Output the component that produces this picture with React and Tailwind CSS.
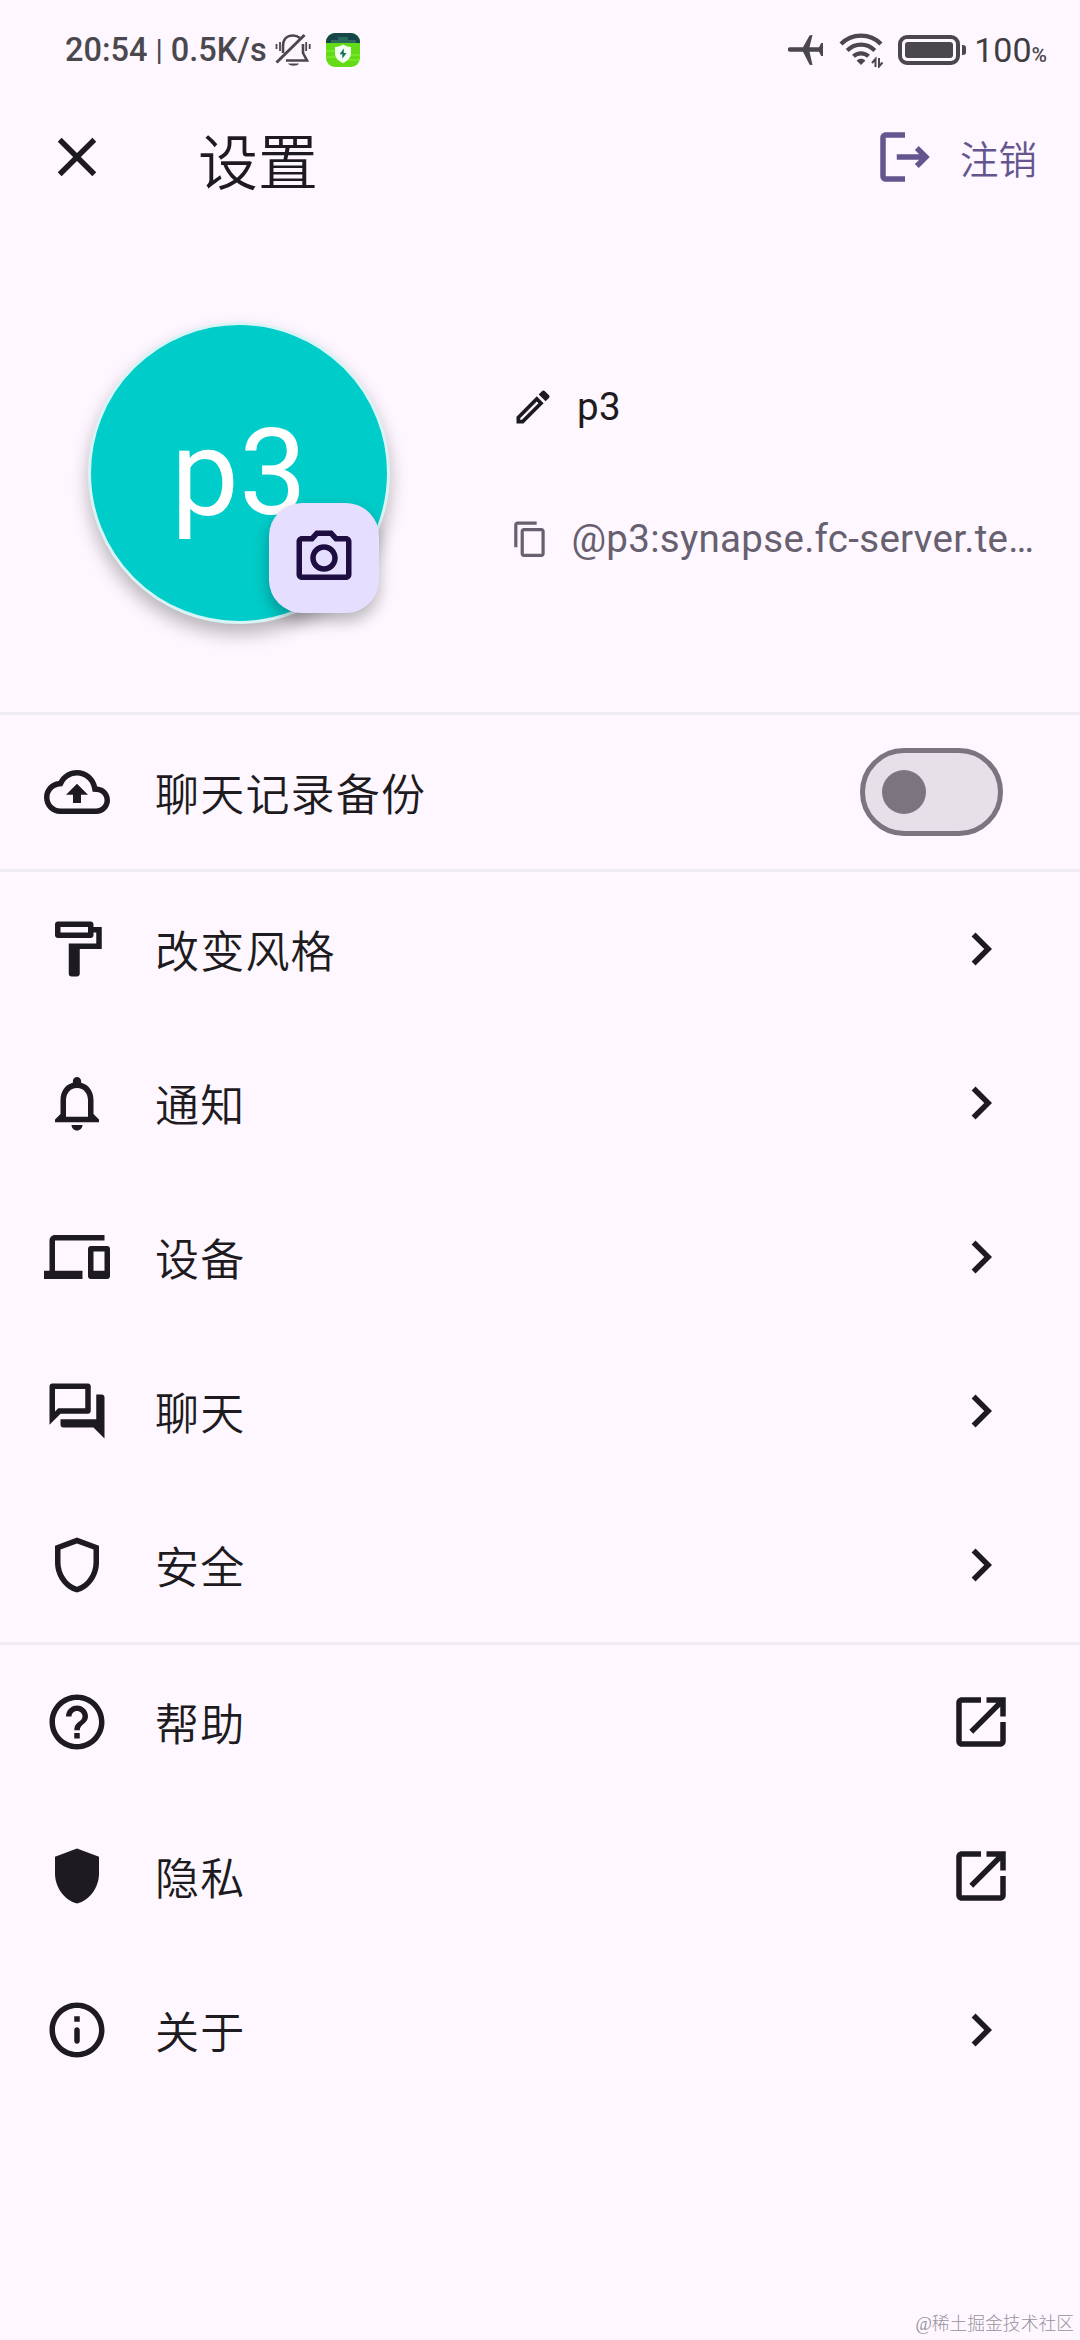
import React, { useState } from "react";

// 24x24 material icon paths
const ICONS = {
  close: "M19 6.41 17.59 5 12 10.59 6.41 5 5 6.41 10.59 12 5 17.59 6.41 19 12 13.41 17.59 19 19 17.59 13.41 12z",
  logout: "M17 8l-1.41 1.41L17.17 11H9v2h8.17l-1.58 1.58L17 16l4-4-4-4zM5 5h7V3H5c-1.1 0-2 .9-2 2v14c0 1.1.9 2 2 2h7v-2H5V5z",
  camera: "M14.12 4l1.83 2H20v12H4V6h4.05l1.83-2h4.24M15 2H9L7.17 4H4c-1.1 0-2 .9-2 2v12c0 1.1.9 2 2 2h16c1.1 0 2-.9 2-2V6c0-1.1-.9-2-2-2h-3.17L15 2zm-3 7c1.65 0 3 1.35 3 3s-1.35 3-3 3-3-1.35-3-3 1.35-3 3-3m0-2c-2.76 0-5 2.24-5 5s2.24 5 5 5 5-2.24 5-5-2.24-5-5-5z",
  edit: "M14.06 9.02l.92.92L5.92 19H5v-.92l9.06-9.06M17.66 3c-.25 0-.51.1-.7.29l-1.83 1.83 3.75 3.75 1.83-1.83c.39-.39.39-1.02 0-1.41l-2.34-2.34c-.2-.2-.45-.29-.71-.29zm-3.6 3.19L3 17.25V21h3.75L17.81 9.94l-3.75-3.75z",
  copy: "M16 1H4c-1.1 0-2 .9-2 2v14h2V3h12V1zm3 4H8c-1.1 0-2 .9-2 2v14c0 1.1.9 2 2 2h11c1.1 0 2-.9 2-2V7c0-1.1-.9-2-2-2zm0 16H8V7h11v14z",
  backup: "M19.35 10.04C18.67 6.59 15.64 4 12 4 9.11 4 6.6 5.64 5.35 8.04 2.34 8.36 0 10.91 0 14c0 3.31 2.69 6 6 6h13c2.76 0 5-2.24 5-5 0-2.64-2.05-4.78-4.65-4.96zM19 18H6c-2.21 0-4-1.79-4-4 0-2.05 1.53-3.76 3.56-3.97l1.07-.11.5-.95C8.08 7.14 9.94 6 12 6c2.62 0 4.88 1.86 5.39 4.43l.3 1.5 1.53.11c1.56.1 2.78 1.41 2.78 2.96 0 1.65-1.35 3-3 3zM8 13h2.55v3h2.9v-3H16l-4-4z",
  paint: "M18 4V3c0-.55-.45-1-1-1H5c-.55 0-1 .45-1 1v4c0 .55.45 1 1 1h12c.55 0 1-.45 1-1V6h1v4H9v11c0 .55.45 1 1 1h2c.55 0 1-.45 1-1v-9h8V4h-3zM16 6H6V4h10v2z",
  bell: "M12 22c1.1 0 2-.9 2-2h-4c0 1.1.9 2 2 2zm6-6v-5c0-3.07-1.63-5.64-4.5-6.32V4c0-.83-.67-1.5-1.5-1.5s-1.5.67-1.5 1.5v.68C7.64 5.36 6 7.92 6 11v5l-2 2v1h16v-1l-2-2zm-2 1H8v-6c0-2.48 1.51-4.5 4-4.5s4 2.02 4 4.5v6z",
  devices: "M4 6h18V4H4c-1.1 0-2 .9-2 2v11H0v3h14v-3H4V6zm19 2h-6c-.55 0-1 .45-1 1v10c0 .55.45 1 1 1h6c.55 0 1-.45 1-1V9c0-.55-.45-1-1-1zm-1 9h-4v-7h4v7z",
  forum: "M15 4v7H5.17L4 12.17V4h11m1-2H3c-.55 0-1 .45-1 1v14l4-4h10c.55 0 1-.45 1-1V3c0-.55-.45-1-1-1zm5 4h-2v9H6v2c0 .55.45 1 1 1h11l4 4V7c0-.55-.45-1-1-1z",
  shield: "M12 2L4 5v6.09c0 5.05 3.41 9.76 8 10.91 4.59-1.15 8-5.86 8-10.91V5l-8-3zm6 9.09c0 4-2.55 7.7-6 8.83-3.45-1.13-6-4.82-6-8.83v-4.7l6-2.25 6 2.25v4.7z",
  shieldFull: "M12 2L4 5v6.09c0 5.05 3.41 9.76 8 10.91 4.59-1.15 8-5.86 8-10.91V5l-8-3z",
  help: "M11 18h2v-2h-2v2zm1-16C6.48 2 2 6.48 2 12s4.48 10 10 10 10-4.48 10-10S17.52 2 12 2zm0 18c-4.41 0-8-3.59-8-8s3.59-8 8-8 8 3.59 8 8-3.59 8-8 8zm0-14c-2.21 0-4 1.79-4 4h2c0-1.1.9-2 2-2s2 .9 2 2c0 2-3 1.75-3 5h2c0-2.25 3-2.5 3-5 0-2.21-1.79-4-4-4z",
  info: "M11 7h2v2h-2zm1 4c-.55 0-1 .45-1 1v4c0 .55.45 1 1 1s1-.45 1-1v-4c0-.55-.45-1-1-1zm0-9C6.48 2 2 6.48 2 12s4.48 10 10 10 10-4.48 10-10S17.52 2 12 2zm0 18c-4.41 0-8-3.59-8-8s3.59-8 8-8 8 3.59 8 8-3.59 8-8 8z",
  chevron: "M10 6L8.59 7.41 13.17 12l-4.58 4.59L10 18l6-6z",
  open: "M19 19H5V5h7V3H5c-1.11 0-2 .9-2 2v14c0 1.1.89 2 2 2h14c1.1 0 2-.9 2-2v-7h-2v7zM14 3v2h3.59l-9.83 9.83 1.41 1.41L19 6.41V10h2V3h-7z",
};

const Icon = ({ name, className = "size-[66px]" }) => (
  <svg viewBox="0 0 24 24" fill="currentColor" className={`shrink-0 ${className}`}>
    <path d={ICONS[name]} />
  </svg>
);

const Divider = () => <div className="h-[3px] shrink-0 bg-[#eeecf2]"></div>;

const SettingsRow = ({ icon, label, children }) => (
  <div className="flex h-[154px] shrink-0 items-center pl-[44px] pr-[66px]">
    <Icon name={icon} />
    <span className="ml-[45px] mt-[8px] flex-1 text-[44px] font-[350] leading-[60px] tracking-[1.2px]">{label}</span>
    {children}
  </div>
);

const StatusBar = () => (
  <div className="flex h-[100px] items-center justify-between pl-[65px] pr-[33px] text-[#4a484c]">
    <div className="flex items-center">
      <span className="text-[32.5px] font-medium leading-10">20:54</span>
      <span className="mx-[8px] text-[30px] leading-10">|</span>
      <span className="text-[32.5px] font-medium leading-10">0.5K/s</span>
      {/* muted bell */}
      <svg viewBox="0 0 36 34" className="ml-[8px] h-[34px] w-[36px]" fill="none" stroke="currentColor" strokeWidth="2.6">
        <path d="M8 20V13C8 6 12 2.500 18 2.500c3 0 5 .9 7 2.500M28 11v9l4 7.500H11" />
        <path d="M1.500 29.500L29.500 2" strokeWidth="3" />
        <path d="M1.500 11v5M5 9v9M31.200 9v9M34.700 11v5" strokeWidth="1.800" />
        <path d="M13 30.500h11c-1.500 3-9 3-11 0z" fill="currentColor" stroke="none" />
      </svg>
      {/* security app */}
      <svg viewBox="0 0 34 34" className="ml-[15px] size-[34px]">
        <defs>
          <clipPath id="app">
            <rect width="34" height="34" rx="9" />
          </clipPath>
        </defs>
        <g clipPath="url(#app)">
          <rect width="34" height="34" fill="#63dc17" />
          <rect width="34" height="10" fill="#16464a" />
          <path d="M5 7h7V4h10v3h8v3H5z" fill="#2b6b5c" />
          <path d="M0 18h9M0 24h12M23 22h11M22 27h12" stroke="#8bef3c" strokeWidth="1" />
        </g>
        <path d="M17 11.500c2.500 1.700 5 2.300 8 2.500v6c0 5-3.500 8-8 10-4.500-2-8-5-8-10v-6c3-.2 5.500-.8 8-2.500z" fill="#f4fff4" />
        <path d="M17.800 15.500l-4.300 5.800h2.800v4.500l4.200-5.800h-2.700z" fill="#14705c" />
      </svg>
    </div>

    <div className="flex items-center">
      {/* airplane */}
      <svg viewBox="0 0 36 32" className="h-[32px] w-[36px]" fill="currentColor">
        <path d="M2 13.200h13L21.500 1.500Q22 1 24.500 1L21.500 13.200h9.500l2.200-4.200H35v13h-1.800L31 17.800H21.500L24.500 31q-2.500 0-3-.5L15 17.800H2a2.300 2.300 0 0 1 0-4.600z" />
      </svg>
      {/* wifi */}
      <svg viewBox="0 0 44 36" className="ml-[15px] h-[36px] w-[44px]" fill="none" stroke="currentColor" strokeWidth="4.2">
        <path d="M2 12C13 .8 31 .8 42 12M8.200 18.500c8-7.800 19.600-7.800 27.600 0M14.500 24.300c4.300-4 10.700-4 15 0" />
        <path d="M22 33l-4.300-4.300c2-2.600 6.600-2.600 8.600 0z" fill="currentColor" stroke="none" />
        <path d="M36.500 35v-8l-3.500 4M40 26v8.500l3.500-4" strokeWidth="2" />
      </svg>
      {/* battery */}
      <div className="ml-[15px] h-[30px] w-[62px] rounded-[9px] border-4 border-current p-[3px]">
        <div className="h-full rounded-[3px] bg-current"></div>
      </div>
      <div className="ml-[2px] h-[10px] w-[4px] rounded-r-[3px] bg-current"></div>
      <span className="ml-[8px] text-[34px] leading-10 text-[#3f3d41]">100</span>
      <span className="mt-[9px] text-[21px] font-medium leading-10">%</span>
    </div>
  </div>
);

const App = () => {
  const [backup, setBackup] = useState(false);

  return (
    <div className="flex h-[2340px] w-[1080px] flex-col overflow-hidden bg-[#fef7ff] font-[Roboto,'Noto_Sans_CJK_SC',sans-serif] text-[#1d1b20]">
      <StatusBar />

      <header className="flex h-[114px] items-center pl-[44px] pr-[43px]">
        <Icon name="close" />
        <h1 className="ml-[88px] mt-[15px] flex-1 text-[60px] font-[350] leading-[80px]">设置</h1>
        <button className="flex items-center text-[#65558f]">
          <Icon name="logout" />
          <span className="ml-[22px] mt-[7px] text-[38.5px] font-[350] leading-[54px]">注销</span>
        </button>
      </header>

      {/* profile */}
      <section className="flex h-[498px] shrink-0 items-start pl-[88px] pt-[108px]">
        <div className="relative size-[302px] shrink-0">
          <div className="flex size-full items-center justify-center rounded-full border-[3px] border-[#d9f4f6] bg-[#00ccc9] text-[121px] leading-none text-white shadow-[0_10px_18px_rgba(0,0,0,0.28)]">
            p3
          </div>
          <button className="absolute bottom-[11px] right-[11px] flex size-[110px] items-center justify-center rounded-[33px] bg-[#e6deff] text-[#1d0d40] shadow-[0_8px_16px_rgba(0,0,0,0.28)]">
            <Icon name="camera" />
          </button>
        </div>
        <div className="ml-[121px] pt-[58px]">
          <div className="flex h-[54px] items-center">
            <Icon name="edit" className="size-[44px]" />
            <span className="ml-[22px] text-[38.5px] leading-[54px] tracking-[0.3px]">p3</span>
          </div>
          <div className="mt-[78px] flex h-[54px] items-center text-[#67606f]">
            <Icon name="copy" className="size-[38.5px]" />
            <span className="ml-[22px] text-[38.5px] leading-[54px] tracking-[0.3px]">@p3:synapse.fc-server.te…</span>
          </div>
        </div>
      </section>

      <Divider />
      <SettingsRow icon="backup" label="聊天记录备份">
        <button
          onClick={() => setBackup(!backup)}
          className={`mr-[11px] flex h-[88px] w-[143px] items-center rounded-full border-[5.5px] border-[#7a757f] bg-[#e6e0e9] px-[17px] ${backup ? "justify-end" : "justify-start"}`}
        >
          <span className="size-[44px] rounded-full bg-[#7a757f]"></span>
        </button>
      </SettingsRow>
      <Divider />
      <SettingsRow icon="paint" label="改变风格"><Icon name="chevron" /></SettingsRow>
      <SettingsRow icon="bell" label="通知"><Icon name="chevron" /></SettingsRow>
      <SettingsRow icon="devices" label="设备"><Icon name="chevron" /></SettingsRow>
      <SettingsRow icon="forum" label="聊天"><Icon name="chevron" /></SettingsRow>
      <SettingsRow icon="shield" label="安全"><Icon name="chevron" /></SettingsRow>
      <Divider />
      <SettingsRow icon="help" label="帮助"><Icon name="open" /></SettingsRow>
      <SettingsRow icon="shieldFull" label="隐私"><Icon name="open" /></SettingsRow>
      <SettingsRow icon="info" label="关于"><Icon name="chevron" /></SettingsRow>

      <footer className="mt-auto pb-1 pr-[6px] text-right font-['Liberation_Serif','Noto_Sans_CJK_SC',serif] text-[17.8px] font-light leading-6 text-[#98939b]">
        @稀土掘金技术社区
      </footer>
    </div>
  );
};

export default App;
